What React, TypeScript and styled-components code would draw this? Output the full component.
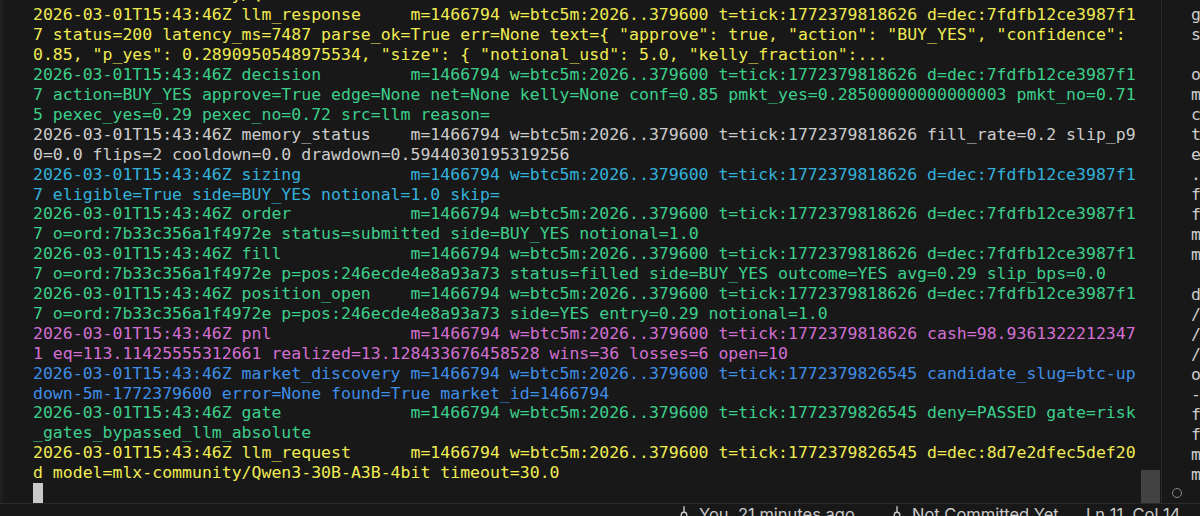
import React from "react";
import styled, { createGlobalStyle } from "styled-components";
import { GitCommitVertical } from "lucide-react";

const Global = createGlobalStyle`
  html, body { margin: 0; padding: 0; background: #181818; }
  body { width: 1200px; height: 516px; overflow: hidden; }
  #root { width: 1200px; height: 516px; }
`;

type Tone = "yellow" | "green" | "gray" | "cyan" | "magenta" | "blue";

const tones: Record<Tone, string> = {
  yellow: "#f0ec52",
  green: "#3ccf8c",
  gray: "#cccccc",
  cyan: "#33b2dc",
  magenta: "#d36fd3",
  blue: "#3f8ee8",
};

const Window = styled.div`
  width: 1200px;
  height: 516px;
  display: flex;
  flex-direction: column;
  background: #181818;
  overflow: hidden;
`;

const Main = styled.div`
  height: 503px;
  flex: none;
  display: flex;
  flex-direction: row;
`;

const Terminal = styled.div`
  width: 1141px;
  flex: none;
  box-sizing: border-box;
  border-left: 3px solid #1f1f1f;
  padding-left: 30px;
  display: flex;
  flex-direction: column;
  justify-content: flex-end;
  overflow: hidden;
  font-family: "DejaVu Sans Mono", "Liberation Mono", monospace;
  font-size: 16.5px;
  line-height: 19.9px;
`;

const Entry = styled.div<{ $tone: Tone }>`
  flex: none;
  width: calc(111ch + 3px);
  color: ${(p) => tones[p.$tone]};
  white-space: pre-wrap;
  word-break: break-all;
  line-break: anywhere;
`;

const Prompt = styled.div`
  flex: none;
  height: 19.9px;
  display: flex;
  align-items: stretch;
`;

const Cursor = styled.span`
  width: 10px;
  background: #cacaca;
`;

const ScrollTrack = styled.div`
  width: 20px;
  flex: none;
  display: flex;
  flex-direction: column;
  justify-content: flex-end;
`;

const ScrollThumb = styled.div`
  width: 19px;
  height: 33px;
  background: #424242;
`;

const Editor = styled.div`
  flex: 1;
  min-width: 0;
  border-left: 1px solid #2b2b2b;
  padding: 5px 0 0 10px;
  display: flex;
  flex-direction: column;
  overflow: hidden;
  font-family: "DejaVu Sans Mono", "Liberation Mono", monospace;
  font-size: 16.5px;
  line-height: 20px;
  color: #cccccc;
`;

const EditorLine = styled.div`
  height: 20px;
  padding-left: 19px;
  white-space: pre;
`;

const Ring = styled.div`
  margin-top: 3px;
  width: 10px;
  height: 10px;
  box-sizing: border-box;
  border: 1.5px solid #8a8a8a;
  border-radius: 50%;
`;

const StatusBar = styled.div`
  height: 30px;
  flex: none;
  box-sizing: border-box;
  border-top: 1px solid #2b2b2b;
  background: #181818;
  display: flex;
  align-items: flex-start;
  padding-left: 673px;
  font-family: Inter, "Liberation Sans", sans-serif;
  font-size: 16.5px;
  line-height: 20px;
  color: #cccccc;
  white-space: nowrap;
`;

const StatusItem = styled.div<{ $width?: number }>`
  display: flex;
  align-items: flex-start;
  gap: 4px;
  flex: none;
  width: ${(p) => (p.$width ? `${p.$width}px` : "auto")};
  svg { margin-top: 0px; flex: none; }
`;

const TS = "2026-03-01T15:43:46Z";
const CTX_A = "m=1466794 w=btc5m:2026..379600 t=tick:1772379818626";
const CTX_B = "m=1466794 w=btc5m:2026..379600 t=tick:1772379826545";
const line = (event: string, ctx: string, rest: string) =>
  `${TS} ${event.padEnd(16)} ${ctx} ${rest}`;

const entries: { tone: Tone; text: string }[] = [
  {
    tone: "yellow",
    text: line("llm_request", CTX_A, "d=dec:7fdfb12ce3987f17 model=mlx-community/Qwen3-30B-A3B-4bit timeout=30.0"),
  },
  {
    tone: "yellow",
    text: line(
      "llm_response",
      CTX_A,
      'd=dec:7fdfb12ce3987f17 status=200 latency_ms=7487 parse_ok=True err=None text={ "approve": true, "action": "BUY_YES", "confidence": 0.85, "p_yes": 0.2890950548975534, "size": { "notional_usd": 5.0, "kelly_fraction":...'
    ),
  },
  {
    tone: "green",
    text: line(
      "decision",
      CTX_A,
      "d=dec:7fdfb12ce3987f17 action=BUY_YES approve=True edge=None net=None kelly=None conf=0.85 pmkt_yes=0.28500000000000003 pmkt_no=0.715 pexec_yes=0.29 pexec_no=0.72 src=llm reason="
    ),
  },
  {
    tone: "gray",
    text: line("memory_status", CTX_A, "fill_rate=0.2 slip_p90=0.0 flips=2 cooldown=0.0 drawdown=0.5944030195319256"),
  },
  {
    tone: "cyan",
    text: line("sizing", CTX_A, "d=dec:7fdfb12ce3987f17 eligible=True side=BUY_YES notional=1.0 skip="),
  },
  {
    tone: "green",
    text: line("order", CTX_A, "d=dec:7fdfb12ce3987f17 o=ord:7b33c356a1f4972e status=submitted side=BUY_YES notional=1.0"),
  },
  {
    tone: "green",
    text: line(
      "fill",
      CTX_A,
      "d=dec:7fdfb12ce3987f17 o=ord:7b33c356a1f4972e p=pos:246ecde4e8a93a73 status=filled side=BUY_YES outcome=YES avg=0.29 slip_bps=0.0"
    ),
  },
  {
    tone: "green",
    text: line(
      "position_open",
      CTX_A,
      "d=dec:7fdfb12ce3987f17 o=ord:7b33c356a1f4972e p=pos:246ecde4e8a93a73 side=YES entry=0.29 notional=1.0"
    ),
  },
  {
    tone: "magenta",
    text: line(
      "pnl",
      CTX_A,
      "cash=98.93613222123471 eq=113.11425555312661 realized=13.128433676458528 wins=36 losses=6 open=10"
    ),
  },
  {
    tone: "blue",
    text: line(
      "market_discovery",
      CTX_B,
      "candidate_slug=btc-updown-5m-1772379600 error=None found=True market_id=1466794"
    ),
  },
  {
    tone: "green",
    text: line("gate", CTX_B, "deny=PASSED gate=risk_gates_bypassed_llm_absolute"),
  },
  {
    tone: "yellow",
    text: line("llm_request", CTX_B, "d=dec:8d7e2dfec5def20d model=mlx-community/Qwen3-30B-A3B-4bit timeout=30.0"),
  },
];

const editorLines = [
  "g", "s", " ", "o", "m", "c", "t", "e", ".", "f", "f", "m", "m", " ",
  "d", "/", "/", "/", "o", "-", "f", "f", "m", "m",
];

export default function App() {
  return (
    <>
      <Global />
      <Window>
        <Main>
          <Terminal>
            {entries.map((e, i) => (
              <Entry key={i} $tone={e.tone}>
                {e.text}
              </Entry>
            ))}
            <Prompt>
              <Cursor />
            </Prompt>
          </Terminal>
          <ScrollTrack>
            <ScrollThumb />
          </ScrollTrack>
          <Editor>
            {editorLines.map((c, i) => (
              <EditorLine key={i}>{c}</EditorLine>
            ))}
            <Ring />
          </Editor>
        </Main>
        <StatusBar>
          <StatusItem $width={213}>
            <GitCommitVertical size={22} strokeWidth={1.5} color="#cccccc" />
            <span>You, 21 minutes ago</span>
          </StatusItem>
          <StatusItem $width={200}>
            <GitCommitVertical size={22} strokeWidth={1.5} color="#cccccc" />
            <span>Not Committed Yet</span>
          </StatusItem>
          <StatusItem>
            <span>Ln 11, Col 14</span>
          </StatusItem>
        </StatusBar>
      </Window>
    </>
  );
}
